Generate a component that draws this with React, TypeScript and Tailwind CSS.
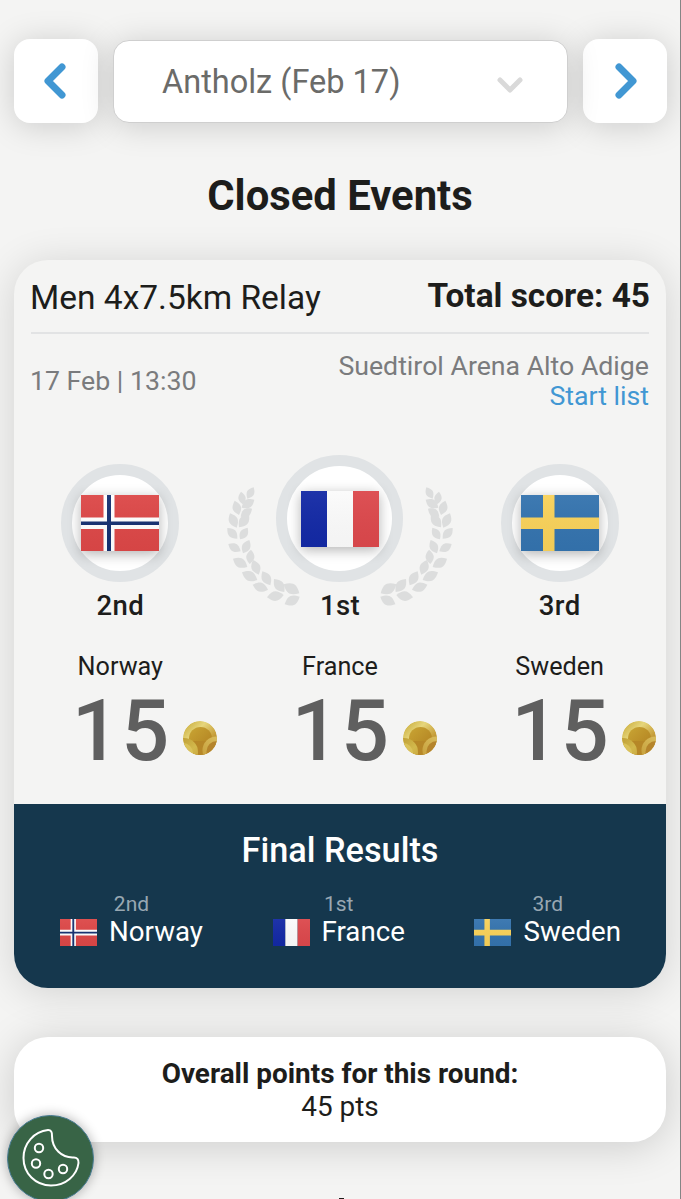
import { ChevronDown, ChevronLeft, ChevronRight } from 'lucide-react'

type Country = 'norway' | 'france' | 'sweden'

const places: { place: string; name: string; country: Country; points: number }[] = [
  { place: '2nd', name: 'Norway', country: 'norway', points: 15 },
  { place: '1st', name: 'France', country: 'france', points: 15 },
  { place: '3rd', name: 'Sweden', country: 'sweden', points: 15 },
]

// base x, base y, tip x, tip y of every leaf on the left branch
const leaves = [
  [97, 146, 116, 112],
  [84, 163, 78, 125],
  [80, 173, 118, 149],
  [72, 195, 59, 152],
  [77, 200, 111, 176],
  [65, 233, 45, 190],
  [72, 232, 102, 193],
  [67, 266, 37, 234],
  [75, 268, 98, 233],
  [77, 304, 40, 282],
  [84, 310, 103, 270],
  [97, 351, 54, 326],
  [104, 342, 108, 299],
  [127, 390, 81, 367],
  [131, 374, 114, 330],
  [159, 419, 113, 404],
  [166, 406, 142, 364],
  [206, 435, 156, 442],
  [208, 426, 177, 387],
  [254, 440, 209, 463],
  [253, 430, 206, 403],
]

function Flag({ country, className }: { country: Country; className: string }) {
  return (
    <svg viewBox="0 0 78 56" preserveAspectRatio="none" className={className}>
      <defs>
        <linearGradient id="shade" x1="0" y1="0" x2="0" y2="1">
          <stop offset="0" stopColor="#fff" stopOpacity=".05" />
          <stop offset="1" stopColor="#000" stopOpacity=".03" />
        </linearGradient>
      </defs>
      {country === 'norway' && (
        <>
          <path fill="#dc4747" d="M0 0h78v56H0z" />
          <path fill="#fff" d="M22.5 0h11v56h-11zM0 22.5h78v11.5H0z" />
          <path fill="#153071" d="M26 0h4v56h-4zM0 26.5h78v3.5H0z" />
        </>
      )}
      {country === 'france' && (
        <>
          <path fill="#1329a5" d="M0 0h26v56H0z" />
          <path fill="#fbfbfb" d="M26 0h26v56H26z" />
          <path fill="#dc484c" d="M52 0h26v56H52z" />
        </>
      )}
      {country === 'sweden' && (
        <>
          <path fill="#3473ae" d="M0 0h78v56H0z" />
          <path fill="#f8d159" d="M22 0h11.5v56H22zM0 22.5h78v11.5H0z" />
        </>
      )}
      <path fill="url(#shade)" d="M0 0h78v56H0z" />
    </svg>
  )
}

function Branch() {
  return (
    <g fill="#dcdddd">
      {leaves.map(([x1, y1, x2, y2]) => {
        const dx = (x2 - x1) * 0.38
        const dy = (y2 - y1) * 0.38
        return (
          <path
            key={`${x1}-${y1}`}
            d={`M${x1} ${y1}C${x1 + dx - dy} ${y1 + dy + dx} ${x2 - dx - dy} ${y2 - dy + dx} ${x2} ${y2}C${x2 - dx + dy} ${y2 - dy - dx} ${x1 + dx + dy} ${y1 + dy - dx} ${x1} ${y1}Z`}
          />
        )
      })}
    </g>
  )
}

function Laurels() {
  return (
    <svg viewBox="0 0 750 540" className="absolute left-1/2 top-[-5px] h-[180px] w-[250px] -translate-x-1/2">
      <Branch />
      <g transform="translate(750 0) scale(-1 1)">
        <Branch />
      </g>
    </svg>
  )
}

function Coin() {
  return (
    <svg viewBox="0 0 34 34" className="mt-[11px] size-[34px]">
      <defs>
        <linearGradient id="gold" x1="0" y1="0" x2="1" y2="1">
          <stop offset="0" stopColor="#c4a42f" />
          <stop offset=".35" stopColor="#e6d67c" />
          <stop offset=".65" stopColor="#c8a03c" />
          <stop offset="1" stopColor="#8f5f17" />
        </linearGradient>
        <linearGradient id="gold-dark" x1="0" y1="0" x2="1" y2="1">
          <stop offset="0" stopColor="#c9a534" />
          <stop offset="1" stopColor="#b07f20" />
        </linearGradient>
        <linearGradient id="gold-left" x1="0" y1="0" x2="1" y2="1">
          <stop offset="0" stopColor="#b6922a" />
          <stop offset=".6" stopColor="#d2b84c" />
          <stop offset="1" stopColor="#c69f37" />
        </linearGradient>
        <linearGradient id="gold-right" x1="0" y1="1" x2="1" y2="0">
          <stop offset="0" stopColor="#c39a34" />
          <stop offset="1" stopColor="#dfc76a" />
        </linearGradient>
        <clipPath id="coin">
          <circle cx="17" cy="17" r="17" />
        </clipPath>
      </defs>
      <g clipPath="url(#coin)">
        <circle cx="17" cy="17" r="17" fill="url(#gold)" />
        <circle cx="17.5" cy="17.5" r="11.5" fill="url(#gold-dark)" />
        <path d="M10 34h14V20H10z" fill="#b68727" />
        <circle cx="1" cy="31" r="14" fill="url(#gold-left)" />
        <circle cx="0" cy="32" r="10" fill="#dac25a" />
        <circle cx="33.500" cy="29.500" r="14" fill="url(#gold-right)" />
        <circle cx="34" cy="30.500" r="10.500" fill="#b5842b" />
      </g>
    </svg>
  )
}

function CookieButton() {
  return (
    <button className="fixed left-[7px] top-[1115px] size-[87px] rounded-full border border-[#477b92] bg-[#386446] shadow-[0_0_12px_rgba(0,0,0,0.3)]">
      <svg
        viewBox="0 0 87 87"
        fill="none"
        stroke="#fff"
        strokeWidth="2"
        strokeLinejoin="round"
        className="absolute -left-px -top-px size-[87px]"
      >
        <path d="M41 15.1C27 16.5 16.500 28.5 16.500 43C16.500 58.500 28.500 70.500 44 70.500C58.500 70.500 70 60.500 71.500 48C71.900 44.500 70 42.300 66.500 42.500C55 43 45 34 45 21C45.200 17 44 15 41 15.100Z" />
        <circle cx="32" cy="33" r="4.200" />
        <circle cx="29" cy="48.500" r="4.200" />
        <circle cx="41.500" cy="59" r="4.200" />
        <circle cx="56" cy="54" r="4.200" />
      </svg>
    </button>
  )
}

function Medallion({ country, first }: { country: Country; first: boolean }) {
  return (
    <div
      className={
        first
          ? 'relative flex size-[127px] items-center justify-center rounded-full border-[11px] border-[#e0e3e5] bg-white'
          : 'relative mt-[9px] flex size-[118px] items-center justify-center rounded-full border-[11px] border-[#e0e3e5] bg-white'
      }
    >
      <Flag country={country} className="h-14 w-[78px] shrink-0 shadow-[0_3px_12px_rgba(0,0,0,0.3)]" />
    </div>
  )
}

export default function App() {
  return (
    <div className="relative h-[1199px] overflow-hidden border-r border-[#858585] bg-[#f4f4f3] font-['Roboto',sans-serif] text-[#1d1d1b]">
      <header className="flex items-center gap-[15px] pl-3.5 pr-[13px] pt-[39px]">
        <button className="flex size-[84px] shrink-0 items-center justify-center rounded-2xl bg-white pr-[3px] text-[#4197d3] shadow-[0_3px_32px_rgba(0,0,0,0.17)]">
          <ChevronLeft className="size-14" strokeWidth={3} />
        </button>
        <button className="relative flex h-[83px] grow items-center justify-between rounded-2xl border border-[#cfcfcf] bg-white pl-12 pr-[37px] shadow-[0_3px_32px_rgba(0,0,0,0.17)]">
          <span className="pt-[3px] text-[32.5px] text-[#6b6b69]">Antholz (Feb 17)</span>
          <ChevronDown className="mt-2 size-10 text-[#d9d9d9]" strokeWidth={3} />
        </button>
        <button className="flex size-[84px] shrink-0 items-center justify-center rounded-2xl bg-white pl-px text-[#4197d3] shadow-[0_3px_32px_rgba(0,0,0,0.17)]">
          <ChevronRight className="size-14" strokeWidth={3} />
        </button>
      </header>

      <h1 className="mt-12 text-center text-[41.8px] font-bold leading-[50px]">Closed Events</h1>

      <section className="mx-3.5 mt-[39px] flex h-[728px] flex-col overflow-hidden rounded-[34px] bg-[#f4f4f3] shadow-[0_4px_40px_rgba(0,0,0,0.14)]">
        <div className="mx-[17px] flex h-[74px] justify-between border-b-2 border-[#e2e3e4] pt-[17px]">
          <h2 className="-ml-px text-[33.5px] leading-[42px]">Men 4x7.5km Relay</h2>
          <p className="-mr-px text-[33.4px] font-bold leading-[38px]">Total score: 45</p>
        </div>
        <div className="mx-[17px] mt-[17px] flex items-center justify-between text-[26.7px] leading-[30px] text-[#7a7b7d]">
          <span className="-ml-px">17 Feb | 13:30</span>
          <div className="text-right">
            <p>Suedtirol Arena Alto Adige</p>
            <a href="#" className="block text-[#4197d3]">Start list</a>
          </div>
        </div>

        <div className="-mx-[3.5px] mt-11 grid grid-cols-3">
          {places.map((item) => (
            <div key={item.place} className="relative flex flex-col items-center">
              {item.place === '1st' && <Laurels />}
              <div className="h-[127px]">
                <Medallion country={item.country} first={item.place === '1st'} />
              </div>
              <p className="mt-2 text-[27.5px] font-medium leading-8 tracking-[0.4px]">{item.place}</p>
              <p className="mt-[30px] text-[25.2px] leading-[30px]">{item.name}</p>
              <div className="ml-12 mt-1.5 flex items-center gap-3">
                <span className="text-[84.5px] font-medium leading-[88px] tracking-[1.500px] text-[#5f5f5f]">{item.points}</span>
                <Coin />
              </div>
            </div>
          ))}
        </div>

        <div className="mt-auto h-[184px] bg-[#15374d] pt-[25px] text-white">
          <h3 className="text-center text-[34.3px] font-medium leading-[42px]">Final Results</h3>
          <div className="mt-[22px] flex justify-between pl-[46px] pr-[45px]">
            {places.map((item) => (
              <div key={item.place}>
                <p className="text-center text-[21px] leading-[22px] text-[#98a7b2]">{item.place}</p>
                <div className="flex items-center gap-3">
                  <Flag country={item.country} className="h-[27px] w-[37px]" />
                  <span className="text-[27.7px] leading-[34px]">{item.name}</span>
                </div>
              </div>
            ))}
          </div>
        </div>
      </section>

      <section className="mx-3.5 mt-[49px] h-[105px] rounded-[34px] bg-white pt-5 text-center text-[27.9px] leading-[33px] shadow-[0_4px_40px_rgba(0,0,0,0.17)]">
        <p className="font-bold">Overall points for this round:</p>
        <p>45 pts</p>
      </section>

      <div className="ml-[339px] mt-14 h-2 w-[5px] bg-[#1d1d1b]" />

      <CookieButton />
    </div>
  )
}
